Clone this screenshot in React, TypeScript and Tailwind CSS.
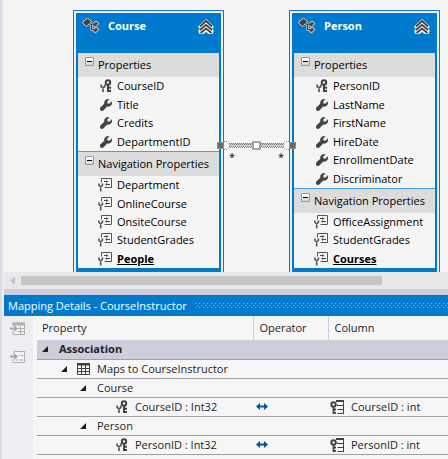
import { ReactNode } from 'react';

type Kind = 'key' | 'prop' | 'nav';
type Item = { name: string; kind: Kind; selected?: boolean };

function EntityIcon() {
  return (
    <svg width="18" height="18" viewBox="0 0 18 18" className="block" aria-hidden="true">
      <g stroke="#c9c6c4" strokeWidth="2.4" strokeLinejoin="round" fill="#c9c6c4">
        <path d="M1.5 5.5 L5.5 2 L8.5 4.5 L4.5 8.5 Z" />
        <path d="M7 7 H9.5 V12.5 H12 M9.5 7 H12" fill="none" />
        <path d="M11 7.5 L14 5 L16 6.5 L13 9.5 Z M11.5 13.5 L14 11 L16 12.5 L13.5 15 Z" />
      </g>
      <path d="M1.5 5.5 L5.5 2 L8.5 4.5 L4.5 8.5 Z" fill="#424242" stroke="#424242" />
      <path d="M7 7 H9.5 V12.5 H12 M9.5 7 H12" fill="none" stroke="#424242" />
      <path d="M11 7.5 L14 5 L16 6.5 L13 9.5 Z M11.5 13.5 L14 11 L16 12.5 L13.5 15 Z" fill="#424242" stroke="#424242" strokeWidth="0.5" />
    </svg>
  );
}

function ChevronsIcon() {
  return (
    <svg width="16" height="16" viewBox="0 0 16 16" className="block" aria-hidden="true">
      <path
        d="M0.5 7 L8 0 L15.5 7 V9 L14 9.5 L15.5 11 V13 L14.5 15 H10.5 L8 13 L5.5 15 H1.5 L0.5 13 V11 L2 9.5 L0.5 9 Z"
        fill="#f1eeea"
      />
      <path d="M2 7.5 L8 2 L14 7.5 M2 11 L8 5.8 L14 11 M2.5 14 L8 9.6 L13.5 14" fill="none" stroke="#424242" strokeWidth="1.7" />
    </svg>
  );
}

function KeyIcon() {
  return (
    <svg width="12" height="14" viewBox="0 0 12 14" className="block" aria-hidden="true">
      <circle cx="8" cy="3.5" r="2.2" fill="none" stroke="#424242" strokeWidth="2" />
      <path d="M8 6 V13 M8 8.8 H11 M8 12 H11" fill="none" stroke="#424242" strokeWidth="2" />
      <path d="M1.2 5.5 V7.5 L3 9 L4.8 7.5 V5.5 M3 8.5 V13" fill="none" stroke="#555" strokeWidth="1.7" />
    </svg>
  );
}

function WrenchIcon() {
  return (
    <svg width="12" height="12" viewBox="0 0 12 12" className="block" aria-hidden="true">
      <path
        d="M9.2 0.4 A3.6 3.6 0 0 0 4.5 4.8 L0.6 8.4 A1.8 1.8 0 0 0 3.4 11.2 L7.2 7.3 A3.6 3.6 0 0 0 11.7 2.6 L9.4 4.9 L7.3 4.5 L7 2.6 Z"
        fill="#424242"
        stroke="#424242"
        strokeWidth="0.4"
      />
    </svg>
  );
}

function NavIcon() {
  return (
    <svg width="15" height="14" viewBox="0 0 15 14" className="block" aria-hidden="true">
      <path d="M3.5 4.5 V0.5 H13.5 V9.5 H6.5" fill="none" stroke="#555" />
      <path d="M6 3.5 H9 M8.5 6.5 H12" fill="none" stroke="#424242" />
      <path d="M8.5 2 L10.5 3.5 L8.5 5 Z M9 5 L7 6.5 L9 8 Z" fill="#555" />
      <path d="M1 5.5 V7.5 L2.6 9 L4.4 7.5 V5.5 M2.7 8.5 V13.5" fill="none" stroke="#555" strokeWidth="1.6" />
    </svg>
  );
}

function TableIcon() {
  return (
    <svg width="13" height="12" viewBox="0 0 13 12" className="block" aria-hidden="true">
      <path d="M0.5 0.5 H12.5 V11.5 H0.5 Z M0.5 5.5 H12.5 M0.5 8.5 H12.5 M4.5 2 V11.5 M8.5 2 V11.5" fill="none" stroke="#424242" />
      <path d="M0 0 H13 V2.5 H0 Z" fill="#424242" />
    </svg>
  );
}

function ColumnKeyIcon() {
  return (
    <svg width="15" height="14" viewBox="0 0 15 14" className="block" aria-hidden="true">
      <circle cx="3.5" cy="4.5" r="2.2" fill="none" stroke="#424242" strokeWidth="2" />
      <path d="M3.5 7 V14 M3.5 9.5 H6 M3.5 12.8 H6" fill="none" stroke="#424242" strokeWidth="1.8" />
      <path d="M6 1 H14" stroke="#424242" strokeWidth="2" />
      <path d="M7.5 5.5 H13.5 M7.5 9.5 H13.5 M7.5 13.5 H14 M13.5 1 V13.5 M7.5 4.5 V6" fill="none" stroke="#424242" />
    </svg>
  );
}

function ArrowsIcon() {
  return (
    <svg width="12" height="7" viewBox="0 0 12 7" className="block" role="img" aria-label="equals">
      <path d="M0 3.5 L4 0 V2.5 H8 V0 L12 3.5 L8 7 V4.5 H4 V7 Z" fill="#00539c" />
    </svg>
  );
}

function ToolIcon({ rows }: { rows: boolean }) {
  return (
    <svg width="16" height="14" viewBox="0 0 16 14" className="block" aria-hidden="true">
      {rows ? (
        <>
          <path d="M3 4 V1 H14.5 V12.5 H3 V9" fill="#f4f4f6" stroke="#b0b0b0" />
          <path d="M2.5 0.5 H15 V3.5 H2.5 Z" fill="#b0b0b0" />
          <path d="M7 6.5 H14 M7 9.5 H14 M10.5 4 V12" stroke="#b0b0b0" />
        </>
      ) : (
        <>
          <path d="M4 4 V1.5 H14.5 V12.5 H3 V9" fill="#f4f4f6" stroke="#b0b0b0" />
          <path d="M9 5.5 H10 M11 5.5 H13 M6 10 H8 M9 10 H13" stroke="#a0a0a0" />
        </>
      )}
      <path d="M0 5.5 H4 V3 L8 6.5 L4 10 V7.5 H0 Z" fill="#a6a6a6" />
    </svg>
  );
}

function Triangle() {
  return (
    <button type="button" aria-label="Collapse" className="block size-[6px]">
      <svg width="6" height="6" viewBox="0 0 6 6" className="block">
        <path d="M6 0 V6 H0 Z" fill="#1e1e1e" />
      </svg>
    </button>
  );
}

function Section({ title, items, tall, divider }: { title: string; items: Item[]; tall: string; divider?: boolean }) {
  return (
    <section>
      <div className={`flex gap-1 bg-[#dcdcdc] pl-[7px] ${divider ? 'h-[25px] border-t border-[#45a0e0]' : 'h-6'}`}>
        <button
          type="button"
          aria-label={`Collapse ${title}`}
          className="mt-1 flex size-[9px] items-center justify-center rounded-[1px] border border-[#8199b5] bg-gradient-to-b from-white to-[#d8d4cc]"
        >
          <span className="block h-px w-[5px] bg-black" />
        </button>
        <h3 className="leading-6">{title}</h3>
      </div>
      <ul className={`grid auto-rows-fr ${tall}`}>
        {items.map((it) => (
          <li key={it.name} className="flex items-center pl-5">
            <span className="flex w-[19px] shrink-0 justify-center pr-1">
              {it.kind === 'key' ? <KeyIcon /> : it.kind === 'prop' ? <WrenchIcon /> : <NavIcon />}
            </span>
            <span className={it.selected ? 'font-bold underline' : ''}>{it.name}</span>
          </li>
        ))}
      </ul>
    </section>
  );
}

function Entity({ name, children }: { name: string; children: ReactNode }) {
  return (
    <article className="w-[151px] shrink-0 border border-b-0 border-[#2468dc] bg-[#e6f3fc] px-[2px] pt-[2px]">
      <div className="border-x-2 border-b-4 border-[#007acc] bg-[#f5f5f5]">
        <header className="flex h-10 items-start bg-[#007acc] pl-1 pr-[5px] text-white">
          <span className="pt-1">
            <EntityIcon />
          </span>
          <h2 className="flex-1 pl-[8px] pt-[5px] font-bold leading-4">{name}</h2>
          <button type="button" aria-label={`Collapse ${name}`} className="pt-[6px]">
            <ChevronsIcon />
          </button>
        </header>
        {children}
      </div>
    </article>
  );
}

function Association() {
  return (
    <div className="relative w-[65px] shrink-0">
      <svg width="79" height="14" viewBox="0 0 79 14" className="absolute -left-[7px] top-[130px] z-10">
        <path d="M7 1.5 H10 L14 4.5 M7 9.5 H10 L14 6.5 M72 1.5 H69 L65 4.5 M72 9.5 H69 L65 6.5" fill="none" stroke="#8a929c" strokeDasharray="1 1" />
        <path d="M12 4.5 H67" stroke="#c9cdd2" strokeWidth="3" />
        <path d="M12 3.5 H67 M13 4.5 H67 M12 6.5 H67 M13 7.5 H67" stroke="#7a828c" strokeDasharray="1 1" />
        <rect x="0.5" y="2.5" width="6" height="6" fill="#686868" stroke="#8e8e8e" />
        <rect x="72.5" y="2.5" width="6" height="6" fill="#686868" stroke="#8e8e8e" />
        <rect x="36" y="2" width="7" height="7" fill="#fff" stroke="#8e8e8e" strokeWidth="1.5" />
      </svg>
      <div className="flex justify-between px-[5px] pt-[139px] leading-4">
        <span>*</span>
        <span>*</span>
      </div>
    </div>
  );
}

const courseProps: Item[] = [
  { name: 'CourseID', kind: 'key' },
  { name: 'Title', kind: 'prop' },
  { name: 'Credits', kind: 'prop' },
  { name: 'DepartmentID', kind: 'prop' },
];
const courseNav: Item[] = [
  { name: 'Department', kind: 'nav' },
  { name: 'OnlineCourse', kind: 'nav' },
  { name: 'OnsiteCourse', kind: 'nav' },
  { name: 'StudentGrades', kind: 'nav' },
  { name: 'People', kind: 'nav', selected: true },
];
const personProps: Item[] = [
  { name: 'PersonID', kind: 'key' },
  { name: 'LastName', kind: 'prop' },
  { name: 'FirstName', kind: 'prop' },
  { name: 'HireDate', kind: 'prop' },
  { name: 'EnrollmentDate', kind: 'prop' },
  { name: 'Discriminator', kind: 'prop' },
];
const personNav: Item[] = [
  { name: 'OfficeAssignment', kind: 'nav' },
  { name: 'StudentGrades', kind: 'nav' },
  { name: 'Courses', kind: 'nav', selected: true },
];

function GroupRow({ name }: { name: string }) {
  return (
    <tr className="h-[19px] border-b border-[#a0a0a0]">
      <td colSpan={3} className="p-0">
        <div className="flex items-center gap-[11px] pl-[43px]">
          <Triangle />
          {name}
        </div>
      </td>
    </tr>
  );
}

function MappingRow({ property, column }: { property: string; column: string }) {
  return (
    <tr className="h-[19px] border-b border-[#a0a0a0]">
      <td className="p-0">
        <div className="flex items-center gap-[7px] pl-[79px]">
          <KeyIcon />
          {property}
        </div>
      </td>
      <td className="p-0 pl-[3px]">
        <ArrowsIcon />
      </td>
      <td className="p-0">
        <div className="flex items-center gap-[6px] pl-[2px]">
          <ColumnKeyIcon />
          {column}
        </div>
      </td>
    </tr>
  );
}

export default function App() {
  return (
    <div className="flex min-h-[459px] flex-col overflow-hidden border-l-2 border-[#dcdce8] bg-[#eeeef2] pl-[2px] font-['Open_Sans','Noto_Sans',sans-serif] text-[11px] leading-[18px] text-black">
      <main className="flex overflow-hidden bg-[#f5f5f5] pl-[69px] pt-[10px]">
        <Entity name="Course">
          <Section title="Properties" items={courseProps} tall="h-[74px]" />
          <Section title="Navigation Properties" items={courseNav} tall="h-[92px]" divider />
        </Entity>
        <Association />
        <Entity name="Person">
          <Section title="Properties" items={personProps} tall="h-[111px]" />
          <Section title="Navigation Properties" items={personNav} tall="h-[55px]" divider />
        </Entity>
      </main>

      <div className="flex h-[17px] items-center bg-[#e8e8ea] pl-[6px]">
        <button type="button" aria-label="Scroll left">
          <svg width="5" height="9" viewBox="0 0 5 9" className="block">
            <path d="M5 0 V9 L0 4.5 Z" fill="#c2c3c9" />
          </svg>
        </button>
        <div className="ml-[6px] mr-[66px] h-[9px] flex-1 bg-[#c6c6c6]" />
      </div>
      <div className="h-[6px] bg-[#cccedb]" />

      <section className="flex flex-1 flex-col">
        <header className="flex h-[21px] items-center gap-2 bg-[#007acc] pl-1 text-white">
          <h2>Mapping Details - CourseInstructor</h2>
          <svg className="h-[5px] min-w-0 flex-1" aria-hidden="true">
            <defs>
              <pattern id="grip" width="4" height="4" patternUnits="userSpaceOnUse">
                <path d="M0 0 H1 V1 H0 Z M2 2 H3 V3 H2 Z" fill="#72bbec" />
              </pattern>
            </defs>
            <rect width="100%" height="5" fill="url(#grip)" />
          </svg>
        </header>
        <div className="flex flex-1">
          <div className="flex w-[29px] shrink-0 flex-col gap-[14px] pl-[6px] pt-[6px]">
            <button type="button" aria-label="View table mapping">
              <ToolIcon rows />
            </button>
            <button type="button" aria-label="View function mapping">
              <ToolIcon rows={false} />
            </button>
          </div>
          <div className="flex-1 bg-[#f6f6f6] pl-1">
            <table className="w-full table-fixed border-collapse text-left text-[#1e1e1e]">
              <colgroup>
                <col className="w-[216px]" />
                <col className="w-[75px]" />
                <col />
              </colgroup>
              <thead>
                <tr className="h-6">
                  <th className="p-0 pl-[5px] font-normal">Property</th>
                  <th className="border-l border-[#cccedb] p-0 pl-[6px] font-normal">Operator</th>
                  <th className="border-l border-[#cccedb] p-0 pl-[6px] font-normal">Column</th>
                </tr>
              </thead>
              <tbody>
                <tr className="h-[19px] border-b border-[#a0a0a0] bg-[#cccedb]">
                  <th colSpan={3} className="p-0 font-bold">
                    <div className="flex items-center gap-[11px] pl-[5px]">
                      <Triangle />
                      Association
                    </div>
                  </th>
                </tr>
                <tr className="h-[19px] border-b border-[#a0a0a0]">
                  <td colSpan={3} className="p-0">
                    <div className="flex items-center pl-6">
                      <Triangle />
                      <span className="pl-[10px] pr-[7px]">
                        <TableIcon />
                      </span>
                      Maps to CourseInstructor
                    </div>
                  </td>
                </tr>
                <GroupRow name="Course" />
                <MappingRow property="CourseID : Int32" column="CourseID : int" />
                <GroupRow name="Person" />
                <MappingRow property="PersonID : Int32" column="PersonID : int" />
              </tbody>
            </table>
          </div>
        </div>
      </section>
    </div>
  );
}
